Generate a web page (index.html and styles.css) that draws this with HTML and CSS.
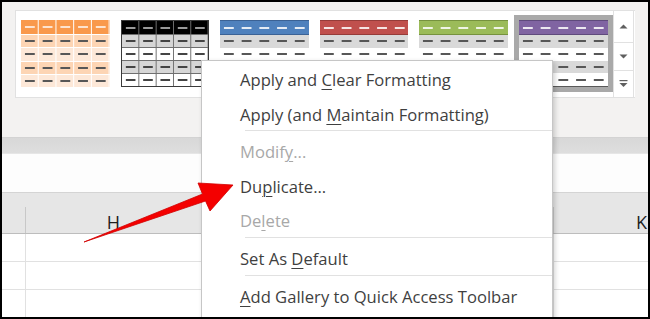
FILE: index.html
```html
<!DOCTYPE html>
<html lang="en">
<head>
<meta charset="utf-8">
<title>Table Styles</title>
<link rel="stylesheet" href="styles.css">
</head>
<body>
<div class="screen">
  <div class="ribbon">
    <div class="gallery">
      <div class="items">
        <div class="item">
          <div class="thumb orange">
            <div class="row head"></div><div class="row odd"></div><div class="row even"></div><div class="row odd"></div><div class="row even"></div>
          </div>
        </div>
        <div class="item">
          <div class="thumb black">
            <div class="row head"></div><div class="row odd"></div><div class="row even"></div><div class="row odd"></div><div class="row even"></div>
          </div>
        </div>
        <div class="item">
          <div class="thumb light blue">
            <div class="row head"></div><div class="row odd"></div><div class="row even"></div><div class="row odd"></div><div class="row even"></div>
          </div>
        </div>
        <div class="item">
          <div class="thumb light red">
            <div class="row head"></div><div class="row odd"></div><div class="row even"></div><div class="row odd"></div><div class="row even"></div>
          </div>
        </div>
        <div class="item">
          <div class="thumb light green">
            <div class="row head"></div><div class="row odd"></div><div class="row even"></div><div class="row odd"></div><div class="row even"></div>
          </div>
        </div>
        <div class="item selected">
          <div class="thumb light purple">
            <div class="row head"></div><div class="row odd"></div><div class="row even"></div><div class="row odd"></div><div class="row even"></div>
          </div>
        </div>
      </div>
      <div class="scroller">
        <div class="sbtn"><svg width="9" height="5" viewBox="0 0 9 5"><path d="M0.5 4.5 L4.5 0.5 L8.5 4.5 Z" fill="#5f5f5f"/></svg></div>
        <div class="sbtn"><svg width="9" height="5" viewBox="0 0 9 5"><path d="M0.5 0.5 L4.5 4.5 L8.5 0.5 Z" fill="#5f5f5f"/></svg></div>
        <div class="sbtn"><svg width="9" height="8" viewBox="0 0 9 8"><rect x="0.5" y="0" width="8" height="1.2" fill="#5f5f5f"/><path d="M0.5 3 L4.5 7 L8.5 3 Z" fill="#5f5f5f"/></svg></div>
      </div>
    </div>
  </div>
  <div class="band"></div>
  <div class="formula"></div>
  <div class="colheads">
    <div class="hdr-top"></div>
    <div class="cols">
      <div class="col first"></div>
      <div class="col">H</div>
      <div class="col"></div>
      <div class="col"></div>
      <div class="col">K</div>
    </div>
  </div>
  <div class="sheet">
    <div class="cells"><div class="cell first"></div><div class="cell"></div><div class="cell"></div><div class="cell"></div><div class="cell"></div></div>
    <div class="cells"><div class="cell first"></div><div class="cell"></div><div class="cell"></div><div class="cell"></div><div class="cell"></div></div>
    <div class="cells"><div class="cell first"></div><div class="cell"></div><div class="cell"></div><div class="cell"></div><div class="cell"></div></div>
  </div>

  <div class="menu">
    <div class="mi">Apply and <u>C</u>lear Formatting</div>
    <div class="mi">Apply (and <u>M</u>aintain Formatting)</div>
    <div class="sep"></div>
    <div class="mi off">Modif<u>y</u>...</div>
    <div class="mi">Du<u>p</u>licate...</div>
    <div class="mi off">De<u>l</u>ete</div>
    <div class="sep"></div>
    <div class="mi">Set As <u>D</u>efault</div>
    <div class="sep"></div>
    <div class="mi"><u>A</u>dd Gallery to Quick Access Toolbar</div>
  </div>

  <svg class="arrow" width="650" height="319" viewBox="0 0 650 319">
    <polygon points="84,242 202.5,194 198,183 233,185 210,211 205.5,201" fill="#f40000" stroke="#d00000" stroke-width="0.8" stroke-linejoin="round"/>
  </svg>
</div>
</body>
</html>
```

FILE: styles.css
```css
* { box-sizing: border-box; }

html, body {
  margin: 0;
  padding: 0;
  background: #000;
}

.screen {
  position: relative;
  width: 650px;
  height: 319px;
  border: 2px solid #000;
  background: #fff;
  overflow: hidden;
  font-family: "Open Sans", "Noto Sans", sans-serif;
}

/* ---------- ribbon ---------- */
.ribbon {
  height: 135px;
  background: #f3f2f1;
  padding: 8px 0 0 13px;
}

.gallery {
  display: flex;
  width: 620px;
  height: 88px;
  background: #fff;
  border: 1px solid #e1e1e1;
  border-right: none;
}

.items {
  display: flex;
  gap: 1px;
  padding-top: 4px;
}

.item {
  width: 98.6px;
  height: 77px;
  border: 5px solid transparent;
}

.item.selected {
  border-color: #a9a9a9;
}

.thumb {
  width: 88.6px;
  height: 67px;
  display: flex;
  flex-direction: column;
}

.row {
  flex: 1;
  --dash: #575757;
  background-image: linear-gradient(to right, transparent 4px, var(--dash) 4px, var(--dash) 14px, transparent 14px);
  background-size: 17.72px 2px;
  background-repeat: repeat-x;
  background-position: 0 50%;
}

.row.head {
  flex: 0 0 14px;
  --dash: rgba(255, 255, 255, 0.85);
}

/* orange medium style */
.orange {
  gap: 1px;
  background: #fff;
}
.orange .row {
  background-image:
    linear-gradient(to right, transparent 4px, var(--dash) 4px, var(--dash) 14px, transparent 14px),
    linear-gradient(to right, transparent 16.72px, #fff 16.72px);
  background-size: 17.72px 2px, 17.72px 100%;
  background-repeat: repeat-x, repeat-x;
  background-position: 0 50%, 0 0;
}
.orange .head { background-color: #f9994c; --dash: #fde3cf; }
.orange .odd { background-color: #fdd5b4; }
.orange .even { background-color: #fde8d8; }

/* black grid style */
.black {
  border: 1px solid #3a3a3a;
  gap: 1px;
  background: #6f6f6f;
}
.black .row {
  background-image:
    linear-gradient(to right, transparent 3.7px, var(--dash) 3.7px, var(--dash) 13.5px, transparent 13.5px),
    linear-gradient(to right, transparent 16.3px, #6f6f6f 16.3px);
  background-size: 17.32px 2px, 17.32px 100%;
  background-repeat: repeat-x, repeat-x;
  background-position: 0 50%, 0 0;
}
.black .head { flex: 0 0 13px; background-color: #000; --dash: #9a9a9a; }
.black .odd { background-color: #d6d6d6; --dash: #444; }
.black .even { background-color: #fff; --dash: #444; }

/* light accent styles */
.light .head {
  background-color: var(--accent);
  border-top: 1px solid var(--dark);
  border-bottom: 1px solid var(--dark);
  flex: 0 0 15px;
}
.light .odd { background-color: #d9d9d9; }
.light .even { background-color: #fff; }
.light .row:last-child { border-bottom: 1px solid var(--dark); }

.blue { --accent: #4f81bd; --dark: #3b6295; }
.red { --accent: #c0504d; --dark: #963c39; }
.green { --accent: #9bbb59; --dark: #76923e; }
.purple { --accent: #8064a2; --dark: #5f4a7c; }
.purple .row:last-child { border-bottom-color: #595959; }

.scroller {
  width: 21px;
  margin-top: -1px;
  margin-bottom: -1px;
  display: flex;
  flex-direction: column;
  border: 1px solid #e1e1e1;
  background: #fff;
}

.sbtn {
  display: flex;
  align-items: center;
  justify-content: center;
  border-bottom: 1px solid #e1e1e1;
}
.sbtn:nth-child(1) { height: 32px; }
.sbtn:nth-child(2) { height: 28px; }
.sbtn:nth-child(3) { flex: 1; border-bottom: none; }

/* ---------- below the ribbon ---------- */
.band {
  height: 17px;
  border-top: 1px solid #d3d3d3;
  background: linear-gradient(#d8d8d8, #dedede);
  border-bottom: 1px solid #e6e6e6;
}

.formula {
  height: 38px;
  background: #fdfdfd;
}

.colheads {
  height: 42px;
  background: #e6e6e6;
  border-top: 1px solid #d4d4d4;
  border-bottom: 1px solid #bdbdbd;
}

.hdr-top {
  height: 14px;
}

.cols,
.cells {
  display: flex;
}

.col {
  flex: 0 0 176px;
  height: 26px;
  border-right: 1px solid #c8c8c8;
  text-align: center;
  font-size: 18px;
  line-height: 30px;
  color: #1f1f1f;
}

.cell {
  flex: 0 0 176px;
  height: 28px;
  border-right: 1px solid #e1e1e1;
  border-bottom: 1px solid #e1e1e1;
}

.cols .first,
.cells .first {
  flex-basis: 24px;
}

/* ---------- context menu ---------- */
.menu {
  position: absolute;
  left: 199px;
  top: 58px;
  width: 352px;
  height: 280px;
  background: #fff;
  border: 1px solid #c6c6c6;
  box-shadow: 2px 2px 5px rgba(0, 0, 0, 0.18);
  padding-top: 2px;
}

.mi {
  height: 34.6px;
  line-height: 34.6px;
  padding-left: 38px;
  font-size: 16.6px;
  color: #3f3f3f;
  white-space: nowrap;
}

.mi.off {
  color: #a8a8a8;
}

.mi u {
  text-decoration-thickness: 1px;
  text-underline-offset: 3px;
}

.sep {
  height: 1px;
  margin: -2px 0 4px 43px;
  background: #e1e1e1;
}

/* ---------- annotation arrow ---------- */
.arrow {
  position: absolute;
  left: -2px;
  top: -2px;
}
```
